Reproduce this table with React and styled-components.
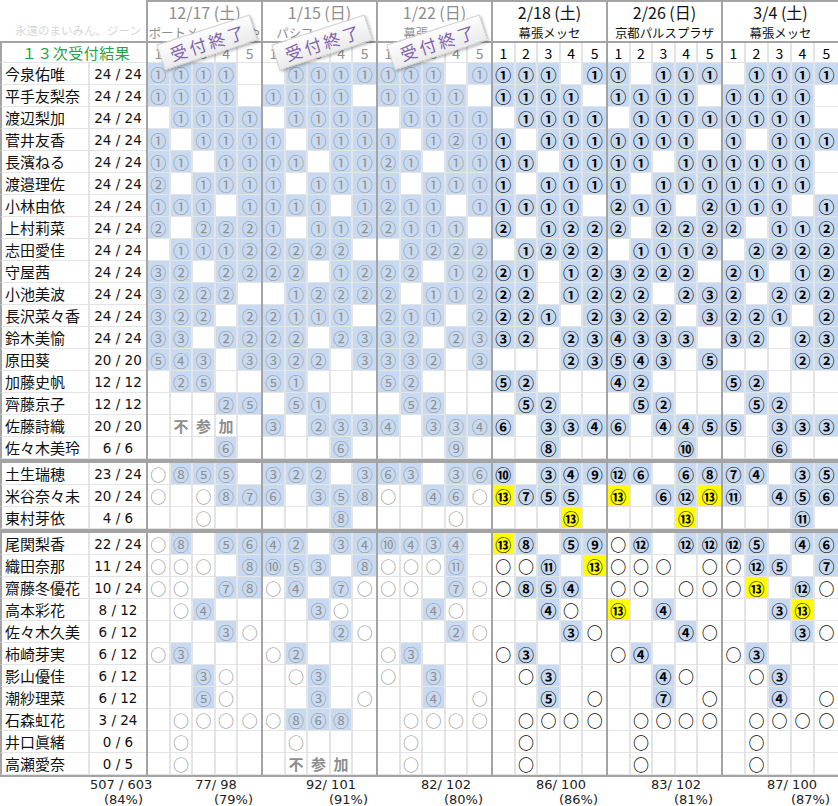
import React from 'react'
import styled, { createGlobalStyle } from 'styled-components'

const LINE = '#a4a4a4'
const GRID = '#e4e4e4'
const BLUE = '#c8daf1'
const DONE_TEXT = '#8e8e8e'

const GlobalStyle = createGlobalStyle`
  *, *::before, *::after {
    box-sizing: border-box;
  }
  html,
  body {
    margin: 0;
    padding: 0;
    background: #fff;
  }
  body {
    font-family: "Noto Sans CJK JP", "Noto Sans", sans-serif;
    color: #111;
  }
`

const events = [
  { date: '12/17 (土)', venue: 'ポートメッセなごや', done: true },
  { date: '1/15 (日)', venue: 'パシフィコ横浜', done: true },
  { date: '1/22 (日)', venue: '幕張メッセ', done: true },
  { date: '2/18 (土)', venue: '幕張メッセ' },
  { date: '2/26 (日)', venue: '京都パルスプラザ' },
  { date: '3/4 (土)', venue: '幕張メッセ' },
]

const totals = [
  ['77/ 98', '(79%)'],
  ['92/ 101', '(91%)'],
  ['82/ 102', '(80%)'],
  ['86/ 100', '(86%)'],
  ['83/ 102', '(81%)'],
  ['87/ 100', '(87%)'],
]

// one string per event, five slots: "." empty, "o" ring, "Y13" yellow 13
const blocks = [
  [
    ['今泉佑唯', '24 / 24', ['1 1 1 1 .', '. 1 1 1 1', '1 1 1 . 1', '1 1 1 . 1', '1 . 1 1 1', '. 1 1 1 1']],
    ['平手友梨奈', '24 / 24', ['1 1 1 1 .', '1 1 1 1 .', '1 1 1 1 .', '1 1 1 1 .', '1 1 1 1 .', '1 1 1 1 .']],
    ['渡辺梨加', '24 / 24', ['. 1 1 1 1', '. 1 1 1 1', '. 1 1 1 1', '. 1 1 1 1', '. 1 1 1 1', '1 1 1 1 .']],
    ['菅井友香', '24 / 24', ['1 . 1 1 1', '1 . 1 1 1', '1 . 1 2 1', '1 . 1 1 1', '1 1 1 1 .', '1 . 1 1 1']],
    ['長濱ねる', '24 / 24', ['1 1 . 1 1', '1 1 . 1 1', '2 1 . 1 1', '1 1 . 1 1', '1 1 . 1 1', '1 1 1 1 .']],
    ['渡邉理佐', '24 / 24', ['2 . 1 1 1', '1 . 1 1 1', '1 . 1 1 1', '1 . 1 1 1', '1 . 1 1 1', '1 1 1 1 .']],
    ['小林由依', '24 / 24', ['1 1 1 . 1', '1 1 1 . 1', '2 1 1 . 1', '1 1 1 1 .', '2 1 1 . 2', '1 1 1 . 1']],
    ['上村莉菜', '24 / 24', ['2 . 2 2 2', '1 . 1 1 2', '2 1 1 1 .', '2 . 1 2 2', '2 . 2 2 2', '2 . 1 1 2']],
    ['志田愛佳', '24 / 24', ['. 1 1 1 2', '2 2 2 2 .', '. 1 2 2 2', '. 1 2 2 2', '. 1 1 1 2', '. 2 2 2 2']],
    ['守屋茜', '24 / 24', ['3 2 . 2 2', '2 2 . 1 2', '2 2 . 1 2', '2 1 . 1 2', '3 2 2 2 .', '2 1 . 1 2']],
    ['小池美波', '24 / 24', ['3 2 2 2 .', '. 1 2 2 2', '2 . 1 1 2', '2 2 . 1 2', '2 2 . 2 3', '2 . 2 2 2']],
    ['長沢菜々香', '24 / 24', ['3 2 2 . 2', '2 1 1 1 .', '2 1 1 . 2', '2 2 1 . 2', '3 2 2 . 3', '2 2 1 . 2']],
    ['鈴木美愉', '24 / 24', ['3 3 . 2 2', '2 2 . 2 3', '3 2 . 2 3', '3 2 . 2 3', '4 3 3 3 .', '3 2 . 2 3']],
    ['原田葵', '20 / 20', ['5 4 3 . 3', '3 2 2 . 3', '3 3 2 . 3', '. . . 2 3', '5 4 3 . 5', '. . . 2 2']],
    ['加藤史帆', '12 / 12', ['. 2 5 . .', '5 1 . . .', '5 2 . . .', '5 2 . . .', '4 2 . . .', '5 2 . . .']],
    ['齊藤京子', '12 / 12', ['. . . 2 5', '. 5 1 . .', '. 5 2 . .', '. 5 2 . .', '. 5 2 . .', '. 5 2 . .']],
    ['佐藤詩織', '20 / 20', ['. 不 参 加 .', '3 . 2 3 3', '4 . 3 3 4', '6 . 3 3 4', '6 . 4 4 5', '5 . 3 3 3']],
    ['佐々木美玲', '6 / 6', ['. . . 6 .', '. . . 6 .', '. . . 9 .', '. . 8 . .', '. . . 10 .', '. . 6 . .']],
  ],
  [
    ['土生瑞穂', '23 / 24', ['o 8 5 5 .', '3 2 2 . 3', '6 3 . 3 6', '10 . 3 4 9', '12 6 . 6 8', '7 4 . 3 5']],
    ['米谷奈々未', '20 / 24', ['o . o 8 7', '6 . 3 5 8', 'o . 4 6 o', 'Y13 7 5 5 .', 'Y13 . 6 12 Y13', '11 . 4 5 6']],
    ['東村芽依', '4 / 6', ['. . o . .', '. . . 8 .', '. . . o .', '. . . Y13 .', '. . . Y13 .', '. . . 11 .']],
  ],
  [
    ['尾関梨香', '22 / 24', ['o 8 . 5 6', '4 2 . 3 4', '10 4 3 4 .', 'Y13 8 . 5 9', 'o 12 . 12 12', '12 5 . 4 6']],
    ['織田奈那', '11 / 24', ['o o o . 8', '10 5 3 . 8', 'o o o 11 .', 'o o 11 . Y13', 'o o o . o', 'o 12 5 . 7']],
    ['齋藤冬優花', '10 / 24', ['o o . 7 8', 'o 4 . 7 o', 'o o . 7 o', 'o 8 5 4 .', 'o o . o o', 'o Y13 . 12 o']],
    ['高本彩花', '8 / 12', ['. o 4 . .', '. . 3 o .', '. . 4 o .', '. . 4 o .', 'Y13 . 4 . .', '. . 3 Y13 .']],
    ['佐々木久美', '6 / 12', ['. . . 3 o', '. . . 2 o', '. . . 2 o', '. . . 3 o', '. . . 4 o', '. . . 3 o']],
    ['柿崎芽実', '6 / 12', ['o 3 . . .', 'o 2 . . .', 'o 3 . . .', 'o 3 . . .', 'o 4 . . .', 'o 3 . . .']],
    ['影山優佳', '6 / 12', ['. . 3 o .', '. o 3 . .', 'o . 3 . .', '. o 3 . .', '. . 4 o .', '. o 3 . .']],
    ['潮紗理菜', '6 / 12', ['. . 5 o .', '. . 3 . o', '. . 4 . o', '. . 5 . o', '. . 7 . o', '. . 4 . o']],
    ['石森虹花', '3 / 24', ['. o o o o', 'o 8 6 8 .', '. o o o o', '. o o o o', '. o o o o', '. o o o o']],
    ['井口眞緒', '0 / 6', ['. o . . .', '. o . . .', '. o . . .', '. o . . .', '. o . . .', '. o . . .']],
    ['高瀬愛奈', '0 / 5', ['. o . . .', '. 不 参 加 .', '. o . . .', '. o . . .', '. o . . .', '. o . . .']],
  ],
]

const CIRCLED = ['', '①', '②', '③', '④', '⑤', '⑥', '⑦', '⑧', '⑨', '⑩', '⑪', '⑫', '⑬']
const TEXT_MARKS = ['不', '参', '加']

const parseMark = token => {
  if (token === '.') return { kind: 'empty', label: '' }
  if (token === 'o') return { kind: 'ring', label: '○' }
  if (token === 'Y13') return { kind: 'num', label: '⑬', tone: 'yellow' }
  if (TEXT_MARKS.includes(token)) return { kind: 'text', label: token }
  return { kind: 'num', label: CIRCLED[Number(token)], tone: 'blue' }
}

const Sheet = styled.div`
  position: relative;
  width: 838px;
  overflow: hidden;
`

const Header = styled.div`
  display: flex;
  height: 41px;
`

const Corner = styled.div`
  width: 146px;
  display: flex;
  align-items: flex-end;
  padding: 0 0 1px 15px;
  overflow: hidden;
  white-space: nowrap;
  color: #d6d6d6;
  font-size: 11.5px;
  line-height: 19px;
`

const EventHead = styled.div`
  width: 115px;
  border-left: 2px solid ${LINE};
  border-top: 2px solid ${LINE};
  display: flex;
  flex-direction: column;
  align-items: center;
  color: ${props => (props.$done ? DONE_TEXT : '#111')};

  &:last-child {
    flex: 1;
  }
`

const DateLabel = styled.div`
  height: 20px;
  font-size: 16px;
  line-height: 20px;
  white-space: nowrap;
`

const VenueLabel = styled.div`
  height: 19px;
  font-size: 12.4px;
  line-height: 22px;
  white-space: nowrap;
`

const Row = styled.div`
  display: flex;
  height: 22px;
`

const IndexRow = styled(Row)`
  border-top: 2px solid ${LINE};
`

const TitleCell = styled.div`
  width: 146px;
  border-left: 2px solid ${LINE};
  border-bottom: 1px solid ${GRID};
  display: flex;
  align-items: center;
  justify-content: center;
  padding-left: 4px;
  color: #27a048;
  font-size: 15px;
  letter-spacing: 0.5px;
`

const NameCell = styled.div`
  width: 90px;
  border-left: 2px solid ${LINE};
  border-right: 2px solid ${GRID};
  border-bottom: 1px solid ${GRID};
  display: flex;
  align-items: center;
  padding-left: 3px;
  font-size: 15px;
  white-space: nowrap;
  overflow: hidden;
`

const CountCell = styled.div`
  width: 56px;
  border-bottom: 1px solid ${GRID};
  display: flex;
  align-items: center;
  justify-content: center;
  font-family: "DejaVu Sans", sans-serif;
  font-size: 13.5px;
  white-space: pre;
`

const Group = styled.div`
  width: 115px;
  border-left: 2px solid ${LINE};
  display: grid;
  grid-template-columns: repeat(5, 1fr);

  &:last-child {
    flex: 1;
  }
`

const toneColor = {
  blue: BLUE,
  yellow: '#ffff00',
}

const Cell = styled.div`
  display: flex;
  align-items: center;
  justify-content: center;
  border-right: 2px solid ${GRID};
  border-bottom: 1px solid ${GRID};
  background: ${props => toneColor[props.$tone] || '#fff'};
  color: ${props => (props.$done ? DONE_TEXT : '#000')};
  font-size: ${props => (props.$kind === 'index' ? '14px' : props.$kind === 'text' ? '15px' : '16px')};
  font-weight: ${props =>
    props.$kind === 'text' || (!props.$done && props.$kind !== 'index') ? 700 : 400};
  line-height: 1;
  overflow: hidden;

  &:last-child {
    border-right: none;
  }
`

const Divider = styled.div`
  height: 4px;
  background: ${LINE};
`

const Totals = styled.div`
  display: flex;
  border-top: 2px solid ${LINE};
  height: 31px;
  font-family: "DejaVu Sans", sans-serif;
  font-size: 13px;
  color: #222;
`

const TotalCell = styled.div`
  width: ${props => (props.$lead ? 146 : 115)}px;
  display: flex;
  flex-direction: column;

  &:last-child {
    flex: 1;
  }
`

const TotalText = styled.div`
  height: 15px;
  line-height: 15px;
  padding-left: ${props => (props.$lead ? 90 : 25)}px;
  text-align: center;
  white-space: nowrap;
`

const PercentText = styled.div`
  height: 15px;
  line-height: 15px;
  padding-right: ${props => (props.$lead ? 3 : 8)}px;
  text-align: right;
  white-space: nowrap;
`

const Stamp = styled.div`
  position: absolute;
  top: 29px;
  left: ${props => 158 + props.$index * 115}px;
  width: 98px;
  height: 27px;
  display: flex;
  align-items: center;
  justify-content: center;
  padding-left: 3px;
  background: linear-gradient(#fdfdfd, #eaeaea);
  border: 1px solid #d0d0d0;
  box-shadow: 1px 2px 3px rgba(0, 0, 0, 0.28);
  color: #8063ad;
  font-size: 17px;
  letter-spacing: 3px;
  transform: rotate(-18deg);
`

const MemberRow = ({ name, count, marks }) => (
  <Row>
    <NameCell>{name}</NameCell>
    <CountCell>{count}</CountCell>
    {marks.map((slots, i) => (
      <Group key={i}>
        {slots.split(' ').map((token, j) => {
          const mark = parseMark(token)
          return (
            <Cell
              key={j}
              $tone={mark.tone}
              $kind={mark.kind}
              $done={events[i].done}
            >
              {mark.label}
            </Cell>
          )
        })}
      </Group>
    ))}
  </Row>
)

export default function App() {
  return (
    <>
      <GlobalStyle />
      <Sheet>
        <Header>
          <Corner>永遠のまいみん、ジーン</Corner>
          {events.map(ev => (
            <EventHead key={ev.date} $done={ev.done}>
              <DateLabel>{ev.date}</DateLabel>
              <VenueLabel>{ev.venue}</VenueLabel>
            </EventHead>
          ))}
        </Header>

        <IndexRow>
          <TitleCell>１３次受付結果</TitleCell>
          {events.map(ev => (
            <Group key={ev.date}>
              {[1, 2, 3, 4, 5].map(n => (
                <Cell key={n} $kind="index" $done={ev.done}>
                  {n}
                </Cell>
              ))}
            </Group>
          ))}
        </IndexRow>

        {blocks.map((rows, b) => (
          <React.Fragment key={b}>
            {b > 0 && <Divider />}
            {rows.map(([name, count, marks]) => (
              <MemberRow key={name} name={name} count={count} marks={marks} />
            ))}
          </React.Fragment>
        ))}

        <Totals>
          <TotalCell $lead>
            <TotalText $lead>507 / 603</TotalText>
            <PercentText $lead>(84%)</PercentText>
          </TotalCell>
          {totals.map(([sum, rate]) => (
            <TotalCell key={sum + rate}>
              <TotalText>{sum}</TotalText>
              <PercentText>{rate}</PercentText>
            </TotalCell>
          ))}
        </Totals>

        {events
          .filter(ev => ev.done)
          .map((ev, i) => (
            <Stamp key={ev.date} $index={i}>
              受付終了
            </Stamp>
          ))}
      </Sheet>
    </>
  )
}
